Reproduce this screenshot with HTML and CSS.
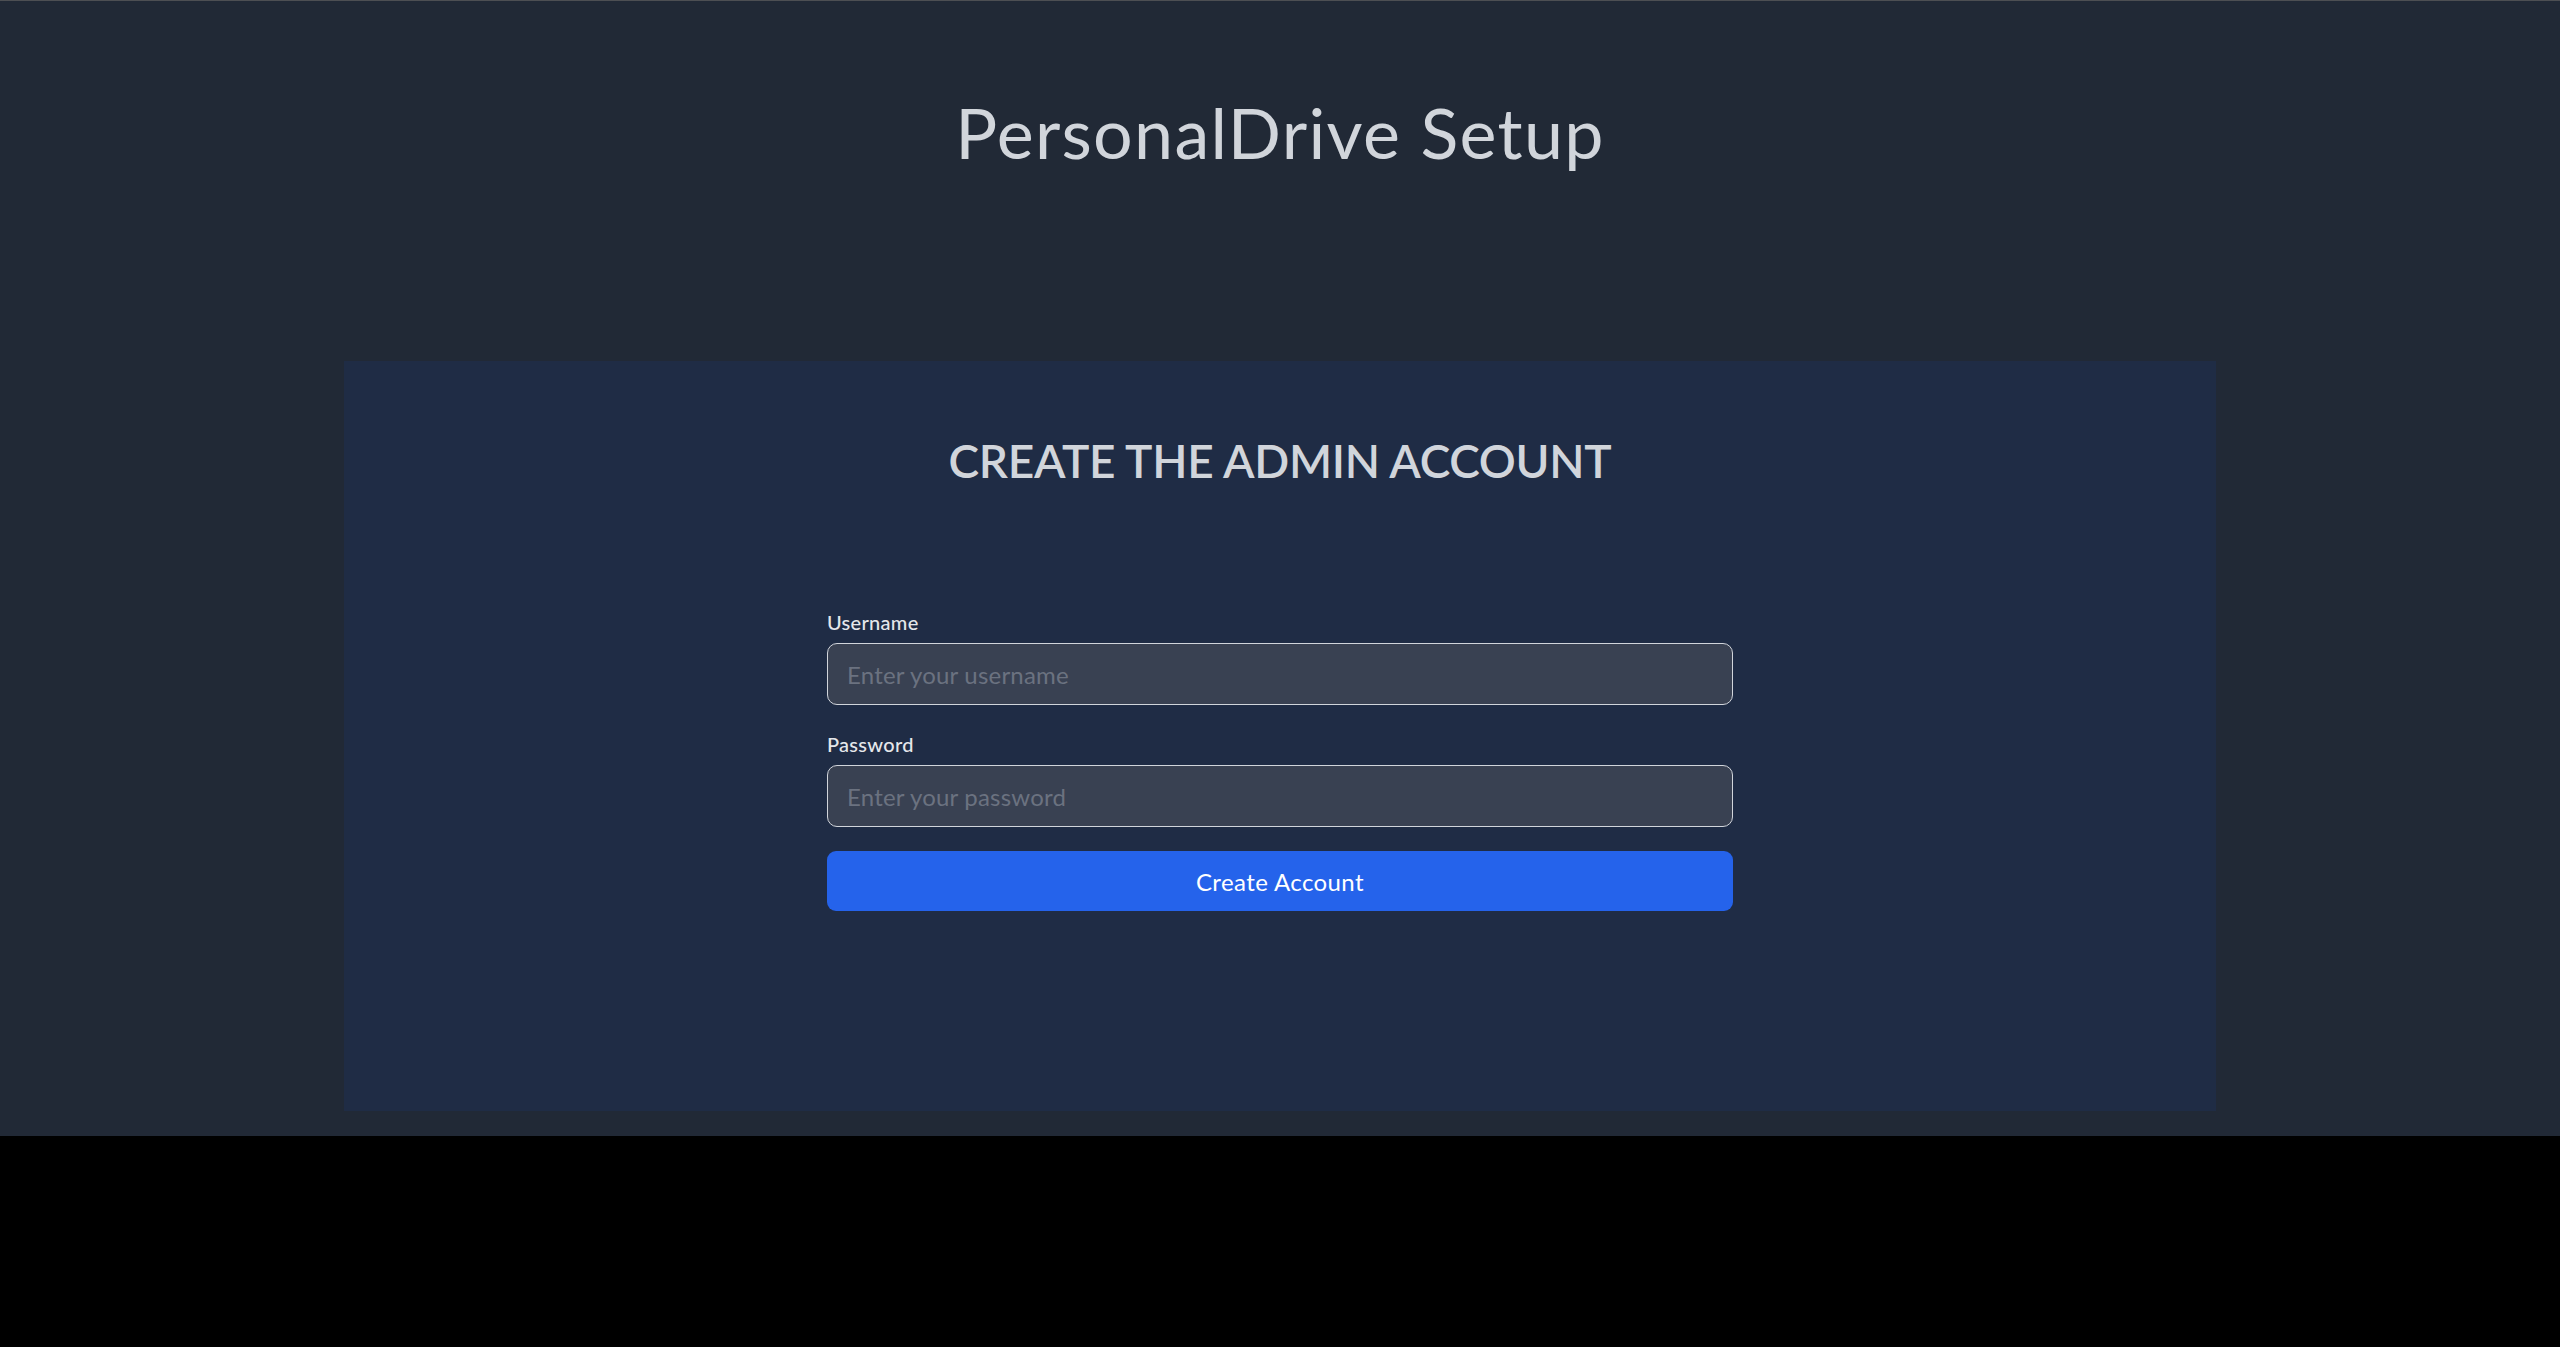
FILE: index.html
```html
<!DOCTYPE html>
<html lang="en">
<head>
<meta charset="utf-8">
<title>PersonalDrive Setup</title>
<link rel="stylesheet" href="styles.css">
</head>
<body>
<div class="page">
  <h1 class="title">PersonalDrive Setup</h1>
  <section class="card">
    <h2 class="card-title">Create the admin account</h2>
    <form class="form">
      <label class="field">
        <span class="label">Username</span>
        <input class="input" type="text" placeholder="Enter your username">
      </label>
      <label class="field field-next">
        <span class="label">Password</span>
        <input class="input" type="password" placeholder="Enter your password">
      </label>
      <button class="submit" type="button">Create Account</button>
    </form>
  </section>
</div>
</body>
</html>
```

FILE: styles.css
```css
html, body {
  margin: 0;
  background: #000000;
}

body {
  font-family: Lato, "Noto Sans", sans-serif;
}

.page {
  background: #212936;
  border-top: 1px solid #4d4f53;
  padding: 96px 0 25px;
}

.title {
  margin: 0;
  font-family: Lato, sans-serif;
  font-weight: 400;
  font-size: 70px;
  line-height: 1;
  letter-spacing: 1.3px;
  color: #d1d5db;
  text-align: center;
}

.card {
  max-width: 1872px;
  margin: 194px auto 0;
  background: #1f2c45;
  padding: 77px 0 200px;
}

.card-title {
  margin: 0;
  font-family: Lato, sans-serif;
  font-weight: 600;
  font-size: 46px;
  line-height: 1;
  letter-spacing: -0.3px;
  color: #d1d5db;
  text-align: center;
  text-transform: uppercase;
}

.form {
  width: 906px;
  margin: 128px auto 0;
  display: flex;
  flex-direction: column;
}

.field {
  display: flex;
  flex-direction: column;
  gap: 11px;
}

.field-next {
  margin-top: 29px;
}

.label {
  font-family: Lato, sans-serif;
  font-weight: 500;
  font-size: 20px;
  line-height: 1;
  letter-spacing: 0.3px;
  color: #e5e7eb;
}

.input {
  box-sizing: border-box;
  height: 62px;
  width: 100%;
  margin: 0;
  padding: 0 19px;
  border: 1px solid #d1d5db;
  border-radius: 10px;
  background: #394152;
  color: #e5e7eb;
  font-family: Lato, sans-serif;
  font-size: 24px;
  letter-spacing: 0.2px;
  outline: none;
}

.input::placeholder {
  color: #6b7280;
}

.submit {
  margin-top: 24px;
  height: 60px;
  border: 0;
  border-radius: 9px;
  background: #2563eb;
  color: #ffffff;
  font-family: Lato, sans-serif;
  font-size: 24px;
  letter-spacing: 0.4px;
  cursor: pointer;
}
```
